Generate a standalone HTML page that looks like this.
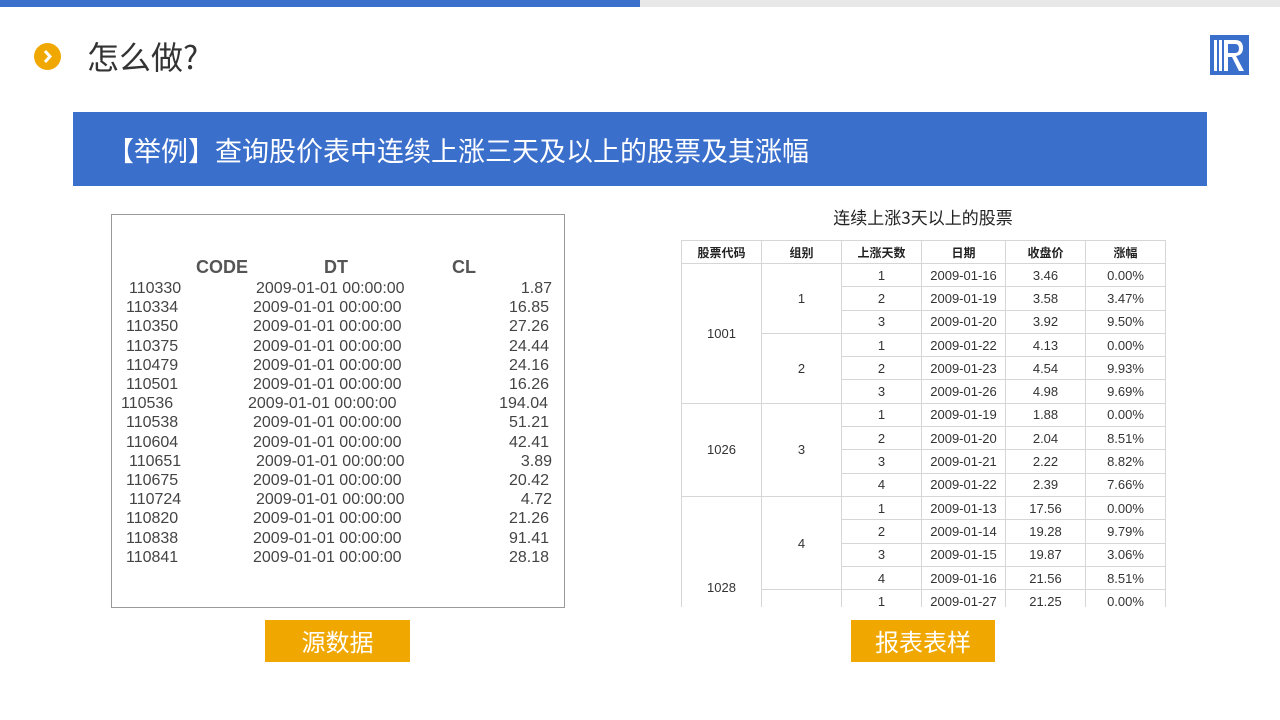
<!DOCTYPE html>
<html><head><meta charset="utf-8"><style>
*{margin:0;padding:0;box-sizing:border-box}
body{width:1280px;height:720px;position:relative;background:#fff;font-family:"Liberation Sans","Noto Sans CJK SC",sans-serif;overflow:hidden}
.abs{position:absolute}
.row{position:absolute;left:0;width:455px;height:19px;font-size:16px;color:#444;line-height:19px}
.row span{position:absolute}
.c{left:14px}.d{left:141px}.v{right:18px}
table{border-collapse:collapse;position:absolute;left:681px;top:240px;font-family:"Liberation Sans","Noto Sans CJK SC",sans-serif;font-size:13px;color:#333}
td{border:1px solid #d6d6d6;text-align:center;height:23.3px;padding:0}
th{border:1px solid #d6d6d6;height:23px;font-size:12px;font-weight:bold;color:#222}
.tag{position:absolute;background:#f0a800;color:#fff;font-size:24px;text-align:center;line-height:42px;height:42px}
</style></head><body>
<div class="abs" style="left:0;top:0;width:640px;height:7px;background:#3b6fcc"></div>
<div class="abs" style="left:640px;top:0;width:640px;height:7px;background:#e8e8e8"></div>
<div class="abs" style="left:34px;top:43px;width:27px;height:27px;border-radius:50%;background:#f0a800"></div>
<svg class="abs" style="left:34px;top:43px" width="27" height="27"><path d="M11 8 L16 13.5 L11 19" stroke="#fff" stroke-width="3" fill="none"/></svg>
<div class="abs" style="left:87px;top:36px;font-size:32px;color:#333;font-family:'Noto Sans CJK SC',sans-serif;line-height:40px">怎么做?</div>
<svg class="abs" style="left:1210px;top:35px" width="40" height="41"><rect x="0" y="0" width="39" height="40" fill="#3b6fcc"/><rect x="4" y="5" width="3" height="31" fill="#fff"/><rect x="9" y="5" width="3" height="31" fill="#fff"/><path d="M14 5 H25 Q33 5 33 13 Q33 20 26 21 L34 36 H29 L22 22 H18 V36 H14 Z M18 9 V18 H25 Q29 18 29 13.5 Q29 9 25 9 Z" fill="#fff"/></svg>
<div class="abs" style="left:73px;top:112px;width:1134px;height:74px;background:#3b6fcc"></div>
<div class="abs" style="left:107px;top:131px;font-size:27px;color:#fff;font-family:'Noto Sans CJK SC',sans-serif;line-height:38px">【举例】查询股价表中连续上涨三天及以上的股票及其涨幅</div>

<div class="abs" style="left:111px;top:214px;width:454px;height:394px;border:1px solid #999">
<div class="row" style="top:43px;font-weight:bold;font-size:18px;color:#555"><span style="left:84px">CODE</span><span style="left:212px">DT</span><span style="left:340px">CL</span></div>
<div class="row" style="top:64px;left:3px"><span class="c">110330</span><span class="d">2009-01-01 00:00:00</span><span class="v">1.87</span></div>
<div class="row" style="top:83px"><span class="c">110334</span><span class="d">2009-01-01 00:00:00</span><span class="v">16.85</span></div>
<div class="row" style="top:102px"><span class="c">110350</span><span class="d">2009-01-01 00:00:00</span><span class="v">27.26</span></div>
<div class="row" style="top:122px"><span class="c">110375</span><span class="d">2009-01-01 00:00:00</span><span class="v">24.44</span></div>
<div class="row" style="top:141px"><span class="c">110479</span><span class="d">2009-01-01 00:00:00</span><span class="v">24.16</span></div>
<div class="row" style="top:160px"><span class="c">110501</span><span class="d">2009-01-01 00:00:00</span><span class="v">16.26</span></div>
<div class="row" style="top:179px;left:-5px"><span class="c">110536</span><span class="d">2009-01-01 00:00:00</span><span class="v" style="right:14px">194.04</span></div>
<div class="row" style="top:198px"><span class="c">110538</span><span class="d">2009-01-01 00:00:00</span><span class="v">51.21</span></div>
<div class="row" style="top:218px"><span class="c">110604</span><span class="d">2009-01-01 00:00:00</span><span class="v">42.41</span></div>
<div class="row" style="top:237px;left:3px"><span class="c">110651</span><span class="d">2009-01-01 00:00:00</span><span class="v">3.89</span></div>
<div class="row" style="top:256px"><span class="c">110675</span><span class="d">2009-01-01 00:00:00</span><span class="v">20.42</span></div>
<div class="row" style="top:275px;left:3px"><span class="c">110724</span><span class="d">2009-01-01 00:00:00</span><span class="v">4.72</span></div>
<div class="row" style="top:294px"><span class="c">110820</span><span class="d">2009-01-01 00:00:00</span><span class="v">21.26</span></div>
<div class="row" style="top:314px"><span class="c">110838</span><span class="d">2009-01-01 00:00:00</span><span class="v">91.41</span></div>
<div class="row" style="top:333px"><span class="c">110841</span><span class="d">2009-01-01 00:00:00</span><span class="v">28.18</span></div>
</div>

<div class="abs" style="left:681px;top:205px;width:484px;text-align:center;font-size:17px;color:#222;font-family:'Noto Sans CJK SC',sans-serif;line-height:24px">连续上涨3天以上的股票</div>
<div class="abs" style="left:681px;top:240px;width:486px;height:367px;overflow:hidden">
<table style="left:0;top:0">
<colgroup><col style="width:80px"><col style="width:80px"><col style="width:80px"><col style="width:84px"><col style="width:80px"><col style="width:80px"></colgroup>
<tr><th>股票代码</th><th>组别</th><th>上涨天数</th><th>日期</th><th>收盘价</th><th>涨幅</th></tr>
<tr><td rowspan="6">1001</td><td rowspan="3">1</td><td>1</td><td>2009-01-16</td><td>3.46</td><td>0.00%</td></tr>
<tr><td>2</td><td>2009-01-19</td><td>3.58</td><td>3.47%</td></tr>
<tr><td>3</td><td>2009-01-20</td><td>3.92</td><td>9.50%</td></tr>
<tr><td rowspan="3">2</td><td>1</td><td>2009-01-22</td><td>4.13</td><td>0.00%</td></tr>
<tr><td>2</td><td>2009-01-23</td><td>4.54</td><td>9.93%</td></tr>
<tr><td>3</td><td>2009-01-26</td><td>4.98</td><td>9.69%</td></tr>
<tr><td rowspan="4">1026</td><td rowspan="4">3</td><td>1</td><td>2009-01-19</td><td>1.88</td><td>0.00%</td></tr>
<tr><td>2</td><td>2009-01-20</td><td>2.04</td><td>8.51%</td></tr>
<tr><td>3</td><td>2009-01-21</td><td>2.22</td><td>8.82%</td></tr>
<tr><td>4</td><td>2009-01-22</td><td>2.39</td><td>7.66%</td></tr>
<tr><td rowspan="6" style="vertical-align:top;padding-top:83px">1028</td><td rowspan="4">4</td><td>1</td><td>2009-01-13</td><td>17.56</td><td>0.00%</td></tr>
<tr><td>2</td><td>2009-01-14</td><td>19.28</td><td>9.79%</td></tr>
<tr><td>3</td><td>2009-01-15</td><td>19.87</td><td>3.06%</td></tr>
<tr><td>4</td><td>2009-01-16</td><td>21.56</td><td>8.51%</td></tr>
<tr><td rowspan="2"></td><td>1</td><td>2009-01-27</td><td>21.25</td><td>0.00%</td></tr>
<tr><td>2</td><td>2009-01-28</td><td>22.00</td><td>3.53%</td></tr>
</table>
</div>

<div class="tag" style="left:265px;top:620px;width:145px;font-family:'Noto Sans CJK SC',sans-serif">源数据</div>
<div class="tag" style="left:851px;top:620px;width:144px;font-family:'Noto Sans CJK SC',sans-serif">报表表样</div>
</body></html>
